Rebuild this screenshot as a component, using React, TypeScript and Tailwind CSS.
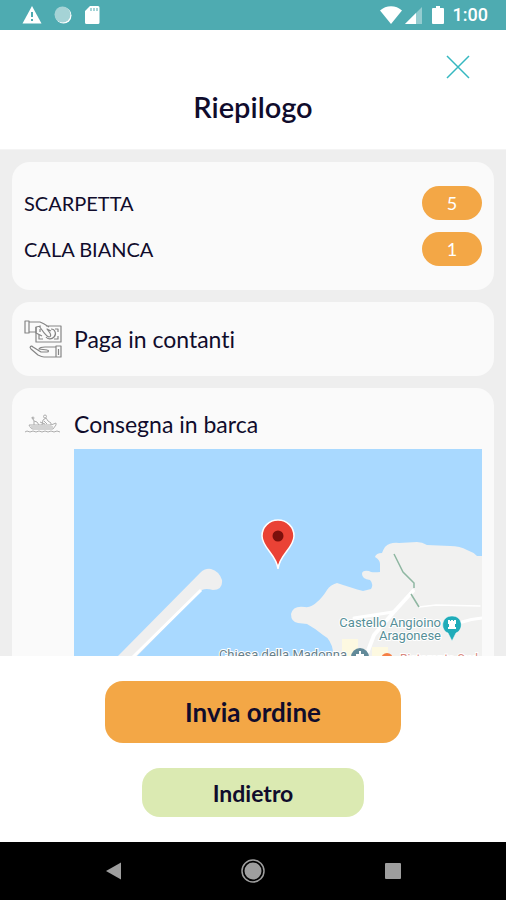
import type { ReactNode } from "react";

const order = [
  { name: "SCARPETTA", quantity: 5 },
  { name: "CALA BIANCA", quantity: 1 },
];

function StatusBar() {
  return (
    <div className="flex h-[30px] shrink-0 items-center justify-between bg-[#4eabb1] pr-[18px] pl-[22px] text-white">
      <div className="flex items-center gap-3">
        <svg width="20" height="20" viewBox="0 0 20 20" aria-hidden="true">
          <path d="M10 1 19.500 18.500H.5Z" fill="currentColor" />
          <path d="M10 7v5M10 14v2" stroke="#4eabb1" strokeWidth="2" />
        </svg>
        <svg width="18" height="20" viewBox="0 0 18 20" aria-hidden="true">
          <circle cx="9.500" cy="10.500" r="8" fill="#fff" />
          <circle cx="8.500" cy="9.500" r="8" fill="#a5d3d6" />
        </svg>
        <svg width="16" height="20" viewBox="0 0 16 20" aria-hidden="true">
          <path d="M6 1h8a1.500 1.500 0 0 1 1.500 1.500v15A1.500 1.500 0 0 1 14 19H2.500A1.500 1.500 0 0 1 1 17.500V6Z" fill="currentColor" />
          <path d="M7 3v3M10 3v3M13 3v3" stroke="#4eabb1" strokeWidth="1" />
        </svg>
      </div>
      <div className="flex items-center">
        <svg width="22" height="20" viewBox="0 0 22 20" aria-hidden="true">
          <path d="M0 5.500C6-.3 16-.3 22 5.500L11 19Z" fill="currentColor" />
        </svg>
        <svg className="ml-[3px]" width="17" height="20" viewBox="0 0 17 20" aria-hidden="true">
          <path d="M17 2v17H0Z" fill="#fff" fillOpacity=".4" />
          <path d="M11 8v11H0Z" fill="currentColor" />
        </svg>
        <svg className="ml-[10px]" width="12" height="20" viewBox="0 0 12 20" aria-hidden="true">
          <path d="M4 1h4v2h3a1 1 0 0 1 1 1v14a1 1 0 0 1-1 1H1a1 1 0 0 1-1-1V4a1 1 0 0 1 1-1h3Z" fill="currentColor" />
        </svg>
        <span className="ml-[9px] font-['Roboto',sans-serif] text-[18px] leading-5 font-medium">1:00</span>
      </div>
    </div>
  );
}

function Card({ children, className }: { children: ReactNode; className: string }) {
  return <section className={`rounded-[18px] bg-[#fafafa] px-3 ${className}`}>{children}</section>;
}

function CashIcon() {
  return (
    <svg width="38" height="38" viewBox="0 0 38 38" fill="none" stroke="#858585" strokeWidth="1.200" strokeLinejoin="round" aria-hidden="true">
      <path d="M1 1h4v12H1ZM5 2h11c3 1 6 3 9 5M5 12h7M22 6h15v16H12V7l5-1" />
      <path d="M15 6l3 4c2 3 4 6 7 7 2 0 2-2 1-4l-3-4 4 2M12 7v6l6 3M16 12v-3M15 15v4h4M31 9h3v3M34 16v3h-4" />
      <path d="M27 9c4 0 6 5 3 8-2 2-6 3-8 0" />
      <path d="M32 26h5v11h-5ZM32 27H21c-3 0-5 0-6 2l8 1c2 0 2 2 0 2h-6L9 27c-2-2-4 0-2 2l7 6c2 1 4 2 6 2h12" />
      <path d="M34.500 29v6" />
    </svg>
  );
}

function BoatIcon() {
  return (
    <svg width="38" height="20" viewBox="0 0 38 20" fill="none" stroke="#adadad" strokeWidth="1" strokeLinejoin="round" aria-hidden="true">
      <path d="M5 11h22l5-2v2l-3 4H9c-2 0-3-2-4-4ZM7 13h22" />
      <path d="M10 11V7l-2-4M10 7l3 1 2 3M18 11l1-5 3-2 2 3 3 2v2M20 7l3 3M16 8l5 2" />
      <circle cx="9" cy="4" r="1" />
      <circle cx="21" cy="2.500" r="1.500" />
      <path d="M1 18l2-1 3 1 3-1 3 1 3-1 3 1 3-1 3 1 3-1 3 1 3-1 3 1" />
    </svg>
  );
}

function DeliveryMap() {
  return (
    <svg
      className="block h-[300px] w-full bg-[#a9d9ff] font-['Roboto',sans-serif]"
      viewBox="0 0 408 300"
      preserveAspectRatio="xMidYMin slice"
      role="img"
      aria-label="Mappa della consegna"
    >
      <rect width="408" height="300" fill="#a9d9ff" />
      <path
        d="M408 107H403Q399 103 393 101Q386 97 376 97L353 96Q348 93 343 93L325 94Q316 93 311 98Q309 101 308 104Q302 104 301 108Q306 111 306 115V123Q297 124 295 122Q288 121 288 125Q288 130 296 131Q300 135 297 140L289 142Q278 139 263 134Q256 136 253 141Q248 149 243 153Q237 159 231 158Q219 156 217 165Q217 173 224 174L233 175Q242 180 249 186Q257 190 259 202V300H408Z"
        fill="#f1f1f0"
      />
      <path d="M268 190h16v17h-16ZM298 198h16v9h-16Z" fill="#fdf9e1" />
      <path d="M-48 300 44 207 126 124Q131 119 137 120Q145 122 148 131Q149 141 139 141Q132 139 128 141L63 207-30 300Z" fill="#efefef" />
      <path d="M127 141 60 207-32 300" fill="none" stroke="#fff" strokeWidth="3" />
      <g fill="none" stroke="#fff" strokeLinecap="round">
        <path d="M339 142 319 164 300 186 292 207" strokeWidth="4" />
        <path d="M280 169 319 163" strokeWidth="3" />
        <path d="M345 158 362 156 406 157" strokeWidth="1.500" />
        <path d="M388 173Q397 170 408 169" strokeWidth="3" />
      </g>
      <path d="M320 105 329 123 340 134V139M337 145 345 158" fill="none" stroke="#8fb7a2" strokeWidth="1.500" />
      <g fontSize="13" stroke="#fff" strokeWidth="2" paintOrder="stroke">
        <g fill="#568f98" textAnchor="end">
          <text x="367" y="178">Castello Angioino</text>
          <text x="367" y="191">Aragonese</text>
        </g>
        <text x="273" y="210" fill="#66808b" textAnchor="end">Chiesa della Madonna</text>
        <text x="326" y="214" fill="#d98a80" fontSize="12">Ristorante Sud</text>
      </g>
      <circle cx="286" cy="208" r="9" fill="#628a99" />
      <path d="M286 202v10M282 206h8" stroke="#fff" strokeWidth="2" />
      <circle cx="313" cy="210" r="6" fill="#f57f45" />
      <path d="M378 192 374 184C366 181 367 167 378 167S390 181 382 184Z" fill="#20acb9" stroke="#fff" strokeWidth=".5" />
      <path d="M374 171h2v1h1v-1h2v1h1v-1h2v4h-1v3h1v2h-8v-2h1v-3h-1Z" fill="#fff" />
      <path
        d="M204 120C203 106 188 99 188 87C188 78 195 71 204 71S220 78 220 87C220 99 205 106 204 120Z"
        fill="#ea4235"
        stroke="#fff"
        strokeWidth="1.500"
      />
      <circle cx="204" cy="87" r="5.500" fill="#7b100c" />
    </svg>
  );
}

function NavigationBar() {
  return (
    <nav aria-label="Sistema" className="flex h-[58px] shrink-0 items-center justify-center gap-[116px] bg-black">
      <button type="button" aria-label="Indietro" className="flex size-6 items-center justify-center">
        <svg width="24" height="24" viewBox="0 0 24 24" aria-hidden="true">
          <path d="M5 12 20 3.500v17Z" fill="#9e9e9e" />
        </svg>
      </button>
      <button type="button" aria-label="Home" className="flex size-6 items-center justify-center">
        <svg width="24" height="24" viewBox="0 0 24 24" aria-hidden="true">
          <circle cx="12" cy="12" r="11" fill="none" stroke="#9e9e9e" strokeWidth="1.500" />
          <circle cx="12" cy="12" r="8.500" fill="#9e9e9e" />
        </svg>
      </button>
      <button type="button" aria-label="Recenti" className="flex size-6 items-center justify-center">
        <span className="size-4 rounded-[1px] bg-[#9e9e9e]" />
      </button>
    </nav>
  );
}

export default function App() {
  return (
    <div className="flex h-screen flex-col bg-white font-['Lato',sans-serif] text-[#100c2c] [font-variant-ligatures:none]">
      <StatusBar />
      <header className="flex h-[120px] shrink-0 flex-col border-b border-[#f4f4f4] px-9 pt-[25px]">
        <button type="button" aria-label="Chiudi" className="flex size-6 items-center justify-center self-end text-[#35b8c0]">
          <svg width="24" height="24" viewBox="0 0 24 24" aria-hidden="true">
            <path d="M1 1 23 23M23 1 1 23" stroke="currentColor" strokeWidth="1.500" />
          </svg>
        </button>
        <h1 className="mt-3 text-center text-[29px] leading-8 font-semibold">Riepilogo</h1>
      </header>

      <main className="flex min-h-0 flex-1 flex-col gap-3 overflow-y-auto bg-[#eee] p-3 [scrollbar-width:none]">
        <Card className="shrink-0 py-6">
          <ul className="flex flex-col gap-3">
            {order.map((item) => (
              <li key={item.name} className="flex h-[34px] items-center justify-between">
                <span className="text-[20px] leading-6">{item.name}</span>
                <span className="flex h-[34px] w-[60px] items-center justify-center rounded-full bg-[#f3a746] text-[18px] leading-6 text-white">
                  {item.quantity}
                </span>
              </li>
            ))}
          </ul>
        </Card>
        <Card className="flex h-[74px] shrink-0 items-center gap-3">
          <CashIcon />
          <h2 className="text-[23px] leading-6">Paga in contanti</h2>
        </Card>
        <Card className="shrink-0 pt-6 pb-6">
          <div className="flex items-center gap-3">
            <BoatIcon />
            <h2 className="text-[23px] leading-6">Consegna in barca</h2>
          </div>
          <div className="mt-[13px] pl-[50px]">
            <DeliveryMap />
          </div>
        </Card>
      </main>

      <footer className="flex shrink-0 flex-col items-center gap-[25px] bg-white py-[25px]">
        <button type="button" className="h-[62px] w-[296px] rounded-[18px] bg-[#f3a746] text-[26px] leading-8 font-bold">
          Invia ordine
        </button>
        <button type="button" className="h-[49px] w-[222px] rounded-[18px] bg-[#dbeab2] text-[23px] leading-8 font-bold">
          Indietro
        </button>
      </footer>
      <NavigationBar />
    </div>
  );
}
